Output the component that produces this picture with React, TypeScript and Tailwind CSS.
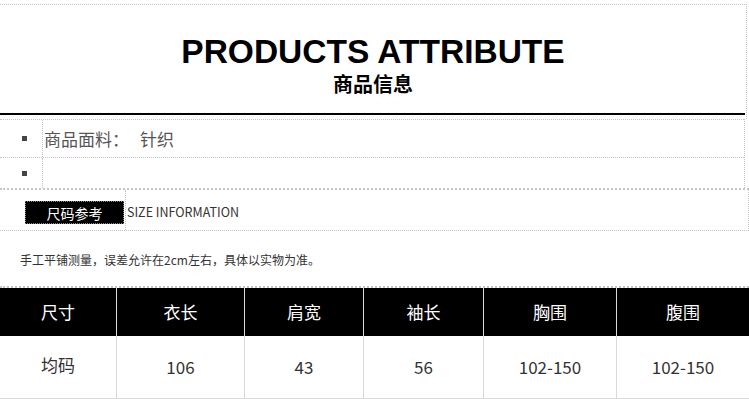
import React from "react";

const cjk = '"Noto Sans CJK SC", "Noto Sans", sans-serif';

export default function App() {
  const heads = ["尺寸", "衣长", "肩宽", "袖长", "胸围", "腹围"];
  const vals = ["均码", "106", "43", "56", "102-150", "102-150"];
  const widths = ["w-[117px]", "w-[128px]", "w-[119px]", "w-[120px]", "w-[133px]", "flex-1"];
  return (
    <div className="w-[749px] h-[399px] overflow-hidden bg-white" style={{ fontFamily: cjk }}>
      {/* header */}
      <div className="mt-[4px] w-[747px] h-[115px] border-t border-r border-dotted border-[#c4c4c4] flex flex-col items-center">
        <div
          className="mt-[30px] text-[33.5px] leading-[34px] font-bold text-black"
          style={{ fontFamily: '"Liberation Sans", Arial, sans-serif' }}
        >
          PRODUCTS ATTRIBUTE
        </div>
        <div className="mt-[3px] text-[20px] leading-[24px] font-bold text-black">商品信息</div>
        <div className="mt-auto mb-[4px] self-start w-[745px] h-[2px] bg-black" />
      </div>

      {/* attribute rows */}
      <div className="w-[745px] border-r border-dotted border-[#c4c4c4]">
        <div className="flex h-[38px] border-t border-dotted border-[#c4c4c4]">
          <div className="w-[43px] border-r border-dotted border-[#c4c4c4] flex items-center">
            <div className="ml-[22px] w-[5px] h-[5px] bg-[#444]" />
          </div>
          <div className="flex items-center pl-[1px] text-[17px] leading-[20px] text-[#555]">
            <span>商品面料：</span>
            <span className="ml-[11px]">针织</span>
          </div>
        </div>
        <div className="flex h-[31px] border-t border-dotted border-[#c4c4c4]">
          <div className="w-[43px] border-r border-dotted border-[#c4c4c4] flex items-center">
            <div className="ml-[22px] w-[5px] h-[5px] bg-[#444]" />
          </div>
          <div className="flex-1" />
        </div>
      </div>

      {/* size title */}
      <div className="flex w-[749px] h-[43px] border-t-2 border-b border-r border-dotted border-[#c4c4c4]">
        <div className="w-[126px] border-r border-dotted border-[#c4c4c4] pl-[25px] pt-[11px]">
          <div className="w-[99px] h-[23px] bg-black border border-dotted border-[#888] flex items-center justify-center text-white text-[14px] leading-[18px]">
            尺码参考
          </div>
        </div>
        <div className="flex items-center pl-[1px] pt-[4px] text-[12.5px] leading-[16px] text-[#333]">
          SIZE INFORMATION
        </div>
      </div>

      {/* note */}
      <div className="h-[55px] flex items-center pl-[20px] pt-[3px] text-[12px] leading-[16px] text-[#333]">
        手工平铺测量，误差允许在2cm左右，具体以实物为准。
      </div>

      {/* table */}
      <div className="w-[749px] border-t-2 border-dotted border-[#c4c4c4]">
        <div className="flex h-[48px] bg-black">
          {heads.map((h, i) => (
            <div
              key={h}
              className={`${widths[i]} ${i < 5 ? "border-r border-[#d9d9d9]" : ""} flex items-center justify-center text-white text-[17px] leading-[20px]`}
            >
              {h}
            </div>
          ))}
        </div>
        <div className="flex h-[63px] border-b border-[#d9d9d9]">
          {vals.map((v, i) => (
            <div
              key={i}
              className={`${widths[i]} ${i < 5 ? "border-r border-[#d9d9d9]" : ""} flex items-center justify-center text-[#333] text-[17px] leading-[20px] ${i === 0 ? "pb-[4px]" : "pb-[1px]"}`}
            >
              {v}
            </div>
          ))}
        </div>
      </div>
    </div>
  );
}
